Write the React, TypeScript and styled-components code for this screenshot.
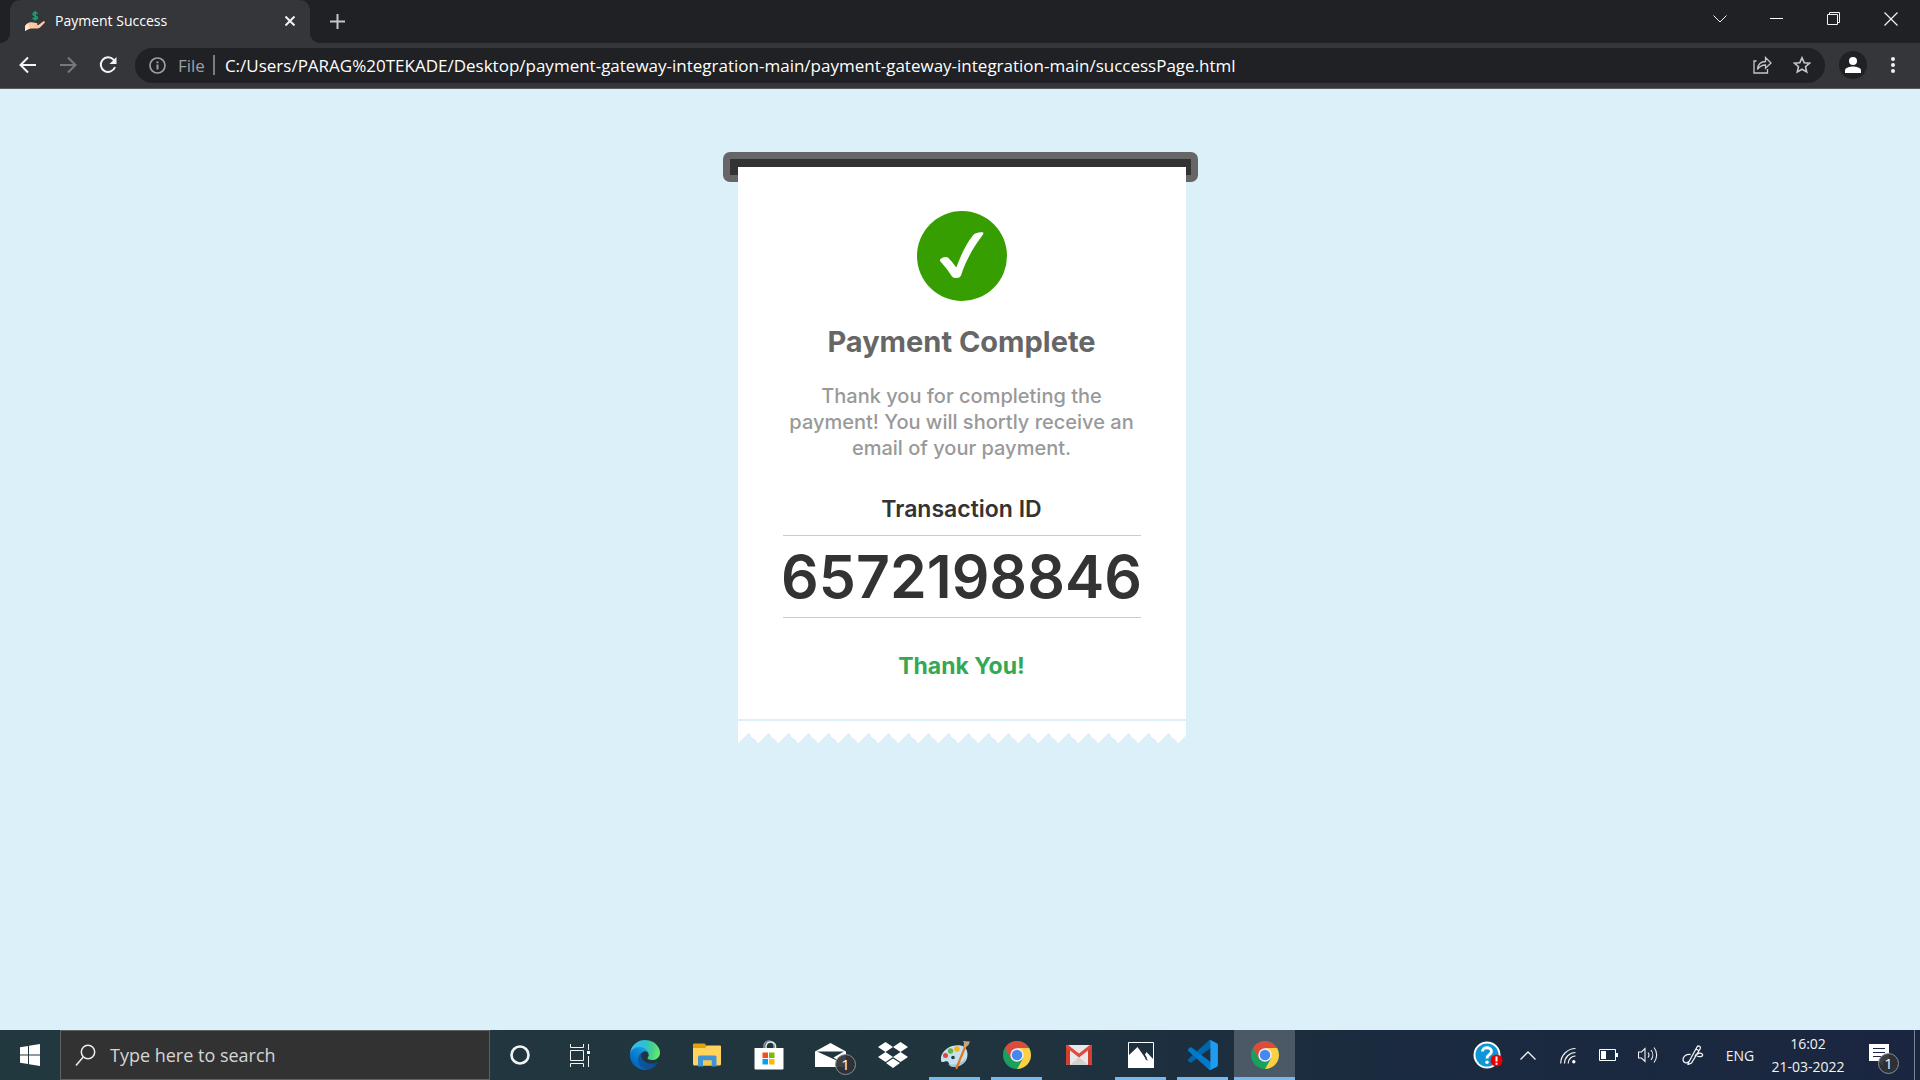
import React from "react";
import styled, { createGlobalStyle, css } from "styled-components";

const ui = `"Open Sans", "Noto Sans", sans-serif`;
const round = `Inter, "Open Sans", sans-serif`;

const GlobalStyle = createGlobalStyle`
  *, *::before, *::after { box-sizing: border-box; }
  body { margin: 0; background: #dbf0f9; font-family: ${ui}; }
  button { border: 0; padding: 0; margin: 0; background: none; color: inherit; font: inherit; }
  input { border: 0; padding: 0; margin: 0; background: none; font: inherit; outline: 0; min-width: 0; }
  svg { display: block; flex: none; }
  h1, h2, p { margin: 0; }
`;

const Screen = styled.div`
  min-height: 100vh;
  display: grid;
  grid-template-rows: auto 1fr auto;
`;

/* ---------- browser ---------- */

const TabStrip = styled.div`
  height: 43px;
  display: flex;
  align-items: stretch;
  padding-left: 10px;
  background: #202124;
  color: #fff;
`;

const Tab = styled.div`
  position: relative;
  width: 300px;
  display: flex;
  align-items: center;
  gap: 10px;
  padding: 0 12px 2px 15px;
  border-radius: 10px 10px 0 0;
  background: #35363a;
  font-size: 14px;

  &::before, &::after {
    content: "";
    position: absolute;
    bottom: 0;
    width: 10px;
    height: 10px;
  }
  &::before { left: -10px; background: radial-gradient(circle at 0 0, #202124 10px, #35363a 10px); }
  &::after { right: -10px; background: radial-gradient(circle at 100% 0, #202124 10px, #35363a 10px); }
`;

const TabTitle = styled.span`
  flex: 1;
  white-space: nowrap;
`;

const IconButton = styled.button<{ $w: number; $color?: string }>`
  width: ${(p) => p.$w}px;
  display: flex;
  align-items: center;
  justify-content: center;
  flex: none;
  color: ${(p) => p.$color ?? "#f1f3f4"};
`;

const NewTab = styled(IconButton)`
  margin-left: 12px;
`;

const WindowControls = styled.div`
  margin-left: auto;
  display: flex;
  padding-bottom: 6px;
`;

const Toolbar = styled.div`
  height: 46px;
  display: flex;
  align-items: center;
  padding: 0 8px 1px;
  background: #35363a;
  border-bottom: 1px solid #5c5d61;
`;

const Omnibox = styled.form`
  flex: 1;
  height: 35px;
  display: flex;
  align-items: center;
  margin: 0 8px 0 7px;
  padding: 0 3px 0 14px;
  border-radius: 18px;
  background: #202124;
  font-size: 17px;
`;

const Scheme = styled.label`
  display: flex;
  align-items: center;
  gap: 12px;
  color: #9aa0a6;
`;

const Divider = styled.span`
  width: 2px;
  height: 20px;
  margin: 0 10px 0 8px;
  background: #7a7c80;
`;

const Address = styled.input`
  flex: 1;
  color: #fff;
`;

const Avatar = styled.span`
  width: 28px;
  height: 28px;
  display: grid;
  place-items: center;
  border-radius: 50%;
  background: #202124;
`;

/* ---------- receipt ---------- */

const Page = styled.main`
  display: flex;
  flex-direction: column;
  align-items: center;
  padding: 63px 0 40px;
  background: #dbf0f9;
`;

const Receipt = styled.section`
  width: 475px;
  color: #333;
  font-family: ${round};
  text-align: center;
`;

const Slot = styled.div`
  height: 30px;
  border: 7px solid #666;
  border-radius: 7px;
  background: #333;
`;

const Sheet = styled.div`
  position: relative;
  margin: -15px 12px 0 15px;
`;

const Paper = styled.div`
  display: flex;
  flex-direction: column;
  align-items: center;
  padding: 44px 45px 36px;
  background: #fff;
`;

const Title = styled.h1`
  margin-top: 21px;
  color: #666;
  font-size: 29px;
  line-height: 40px;
  font-weight: 700;
  white-space: nowrap;
`;

const Message = styled.p`
  margin-top: 21px;
  color: #999;
  font-size: 20px;
  line-height: 26px;
  font-weight: 500;
`;

const Heading = styled.h2<{ $thanks?: boolean }>`
  margin-top: 31px;
  font-size: 23px;
  line-height: 34px;
  font-weight: ${(p) => (p.$thanks ? 700 : 600)};
  color: ${(p) => (p.$thanks ? "#34a853" : "#333")};
`;

const TransactionId = styled.div`
  align-self: stretch;
  display: flex;
  justify-content: center;
  margin-top: 9px;
  border: 1px solid #ccc;
  border-width: 1px 0;
  font-size: 59px;
  line-height: 81px;
  font-weight: 600;
`;

const Tear = styled.div`
  height: 22px;
  margin-top: 2px;
  padding-top: 12px;
  background: linear-gradient(#fff, #fff) top / 100% 12px no-repeat;

  &::after {
    content: "";
    display: block;
    height: 10px;
    background: conic-gradient(from 135deg at 50% 0, transparent 90deg, #fff 0) 0 0 / 20px 10px repeat-x;
  }
`;

/* ---------- taskbar ---------- */

const Taskbar = styled.footer`
  height: 50px;
  display: flex;
  align-items: stretch;
  background: linear-gradient(90deg, #22383f 0%, #20343e 50%, #1b2b3f 72%, #1a2640 100%);
  color: #fff;
`;

const Search = styled.label`
  width: 430px;
  display: flex;
  align-items: center;
  gap: 14px;
  padding: 0 14px;
  border: 1px solid #5f6061;
  background: #323232;
  font-size: 18px;
`;

const SearchInput = styled.input`
  flex: 1;
  color: #fff;
  &::placeholder { color: #d6d6d6; opacity: 1; }
`;

const Apps = styled.nav`
  display: flex;
  gap: 1px;
  margin-left: 3px;
`;

const AppButton = styled.button<{ $state?: "open" | "active" }>`
  position: relative;
  width: 61px;
  display: grid;
  place-items: center;
  ${(p) => p.$state === "active" && css`background: #4b5866;`}
  ${(p) =>
    p.$state &&
    css`
      &::after {
        content: "";
        position: absolute;
        bottom: 0;
        left: ${p.$state === "active" ? 0 : 5}px;
        right: ${p.$state === "active" ? 0 : 5}px;
        height: 3px;
        background: #76b9ed;
      }
    `}
`;

const WithBadge = styled.span`
  position: relative;
  display: block;
`;

const Badge = styled.span`
  position: absolute;
  left: 20px;
  top: 11px;
  width: 21px;
  height: 21px;
  border: 1px solid #8b9094;
  border-radius: 50%;
  background: rgba(48, 50, 54, 0.93);
  font-size: 15px;
  line-height: 19px;
  text-align: center;
`;

const NoteBadge = styled(Badge)`
  left: 9px;
  top: 9px;
`;

const Tray = styled.div`
  margin-left: auto;
  display: flex;
  align-items: stretch;
`;

const Language = styled(IconButton)`
  font-size: 14px;
`;

const Clock = styled(IconButton)`
  flex-direction: column;
  font-size: 14px;
  line-height: 23px;
`;

const ShowDesktop = styled.button`
  width: 6px;
  border-left: 1px solid #7b8391;
`;

/* ---------- drawings ---------- */

const stroke = { fill: "none", stroke: "currentColor" };

const HandIcon = () => (
  <svg width="20" height="20" viewBox="0 0 20 20">
    <path d="M12.500 2.800C11.500 1.500 8 1.300 8 3.300S12.500 4.500 12.500 6.500 8.700 8.500 7.700 7M10.200 0V9.500" fill="none" stroke="#12a672" strokeWidth="1.500" />
    <path d="M0 15C2 12 4 11 6.500 11.300L11.500 12c1.500.3 1.300 2-.2 2L9 14.200l4.500-.2 4.500-3.500c1.500-.7 2.500.2 1.500 1.500L15 16.500c-1 .8-2 1-3.500 1H6L3 18.200 0 20z" fill="#fcc9a5" />
    <path d="M0 15l3-2.500 1.500 5L0 20z" fill="#ffe6cf" />
  </svg>
);

const Chrome = () => (
  <svg width="28" height="28" viewBox="0 0 48 48">
    <circle cx="24" cy="24" r="24" fill="#18a05e" />
    <path d="M24 12H44.780A24 24 0 0 0 3.220 12L13.600 30 24 24z" fill="#dc4b3e" />
    <path d="M24 12H44.780A24 24 0 0 1 24 48L34.400 30z" fill="#ffce44" />
    <circle cx="24" cy="24" r="11.500" fill="#f1f1f1" />
    <circle cx="24" cy="24" r="9" fill="#4688f1" />
  </svg>
);

const Edge = () => (
  <svg width="30" height="30" viewBox="0 0 256 256">
    <defs>
      <linearGradient id="edgeA" x1="60" y1="177" x2="241" y2="177" gradientUnits="userSpaceOnUse">
        <stop stopColor="#0c59a4" /><stop offset="1" stopColor="#114a8b" />
      </linearGradient>
      <linearGradient id="edgeB" x1="150" y1="90" x2="45" y2="225" gradientUnits="userSpaceOnUse">
        <stop stopColor="#1b9de2" /><stop offset=".5" stopColor="#0b7fd2" /><stop offset="1" stopColor="#0067c0" />
      </linearGradient>
      <linearGradient id="edgeC" x1="10" y1="70" x2="245" y2="120" gradientUnits="userSpaceOnUse">
        <stop stopColor="#35c1f1" /><stop offset=".4" stopColor="#2cbfd5" /><stop offset=".75" stopColor="#45d08a" /><stop offset="1" stopColor="#66eb6e" />
      </linearGradient>
    </defs>
    <path fill="url(#edgeA)" d="M231.070 190.540c-3.380 1.770-6.880 3.350-10.460 4.720-11.480 4.280-23.650 6.470-35.910 6.470-47.320 0-88.540-32.550-88.540-74.320.13-11.410 6.410-21.860 16.420-27.340-42.800 1.800-53.800 46.400-53.800 72.530 0 73.880 68.100 81.370 82.770 81.370 7.910 0 19.840-2.300 27-4.560l1.310-.44c27.530-9.510 51-28.110 66.600-52.800 1.230-1.990.6-4.590-1.380-5.800a4.240 4.240 0 0 0-4.010.17z" />
    <path fill="url(#edgeB)" d="M105.730 241.420c-8.910-5.540-16.640-12.800-22.740-21.340-26.310-36.060-18.410-86.620 17.650-112.930 3.760-2.740 7.730-5.170 11.880-7.260 3.120-1.470 8.450-4.130 15.540-4 10.110.08 19.610 4.870 25.690 12.960 4.040 5.370 6.260 11.910 6.360 18.630 0-.21 24.460-79.600-80-79.600-43.900 0-80 41.660-80 78.210-.17 19.350 3.970 38.500 12.110 56.060 27.620 58.910 94.900 87.780 156.640 67.240-21.140 6.650-44.130 3.740-62.970-7.970z" />
    <path fill="url(#edgeC)" d="M152.330 148.860c-.81 1.050-3.300 2.500-3.300 5.660 0 2.610 1.700 5.120 4.720 7.230 14.380 10 41.490 8.680 41.560 8.680a59.560 59.560 0 0 0 30.270-8.350A61.380 61.380 0 0 0 255.870 109.200c.26-22.410-8-37.310-11.340-43.910C223.340 23.840 177.720 0 128.110 0A128 128 0 0 0 .1 126.200c.48-36.540 36.800-66.050 80-66.050 3.500 0 23.460.34 42 10.070 16.340 8.580 24.900 18.940 30.850 29.210 6.180 10.670 7.280 24.150 7.280 29.520s-2.740 13.330-7.900 19.910z" />
  </svg>
);

const Explorer = () => (
  <svg width="28" height="24" viewBox="0 0 28 24">
    <path d="M0 1.500Q0 .5 1 .5h10.500L14 3H28v6H0z" fill="#e2a10b" />
    <path d="M0 5h12l2-2.500h13q1 0 1 1V21q0 1.500-1.500 1.500h-25Q0 22.500 0 21z" fill="#ffd35c" />
    <path d="M5 14q0-1.500 1.500-1.500h15.500q1.500 0 1.500 1.500v9.500H18.500v-6H10v6H5z" fill="#3f94d8" />
    <path d="M10 17.500h8.500v5H10z" fill="#f5c84b" />
  </svg>
);

const Store = () => (
  <svg width="30" height="30" viewBox="0 0 30 30">
    <path d="M10 8V6a5 5 0 0 1 10 0v2" fill="none" stroke="#8d979c" strokeWidth="1.500" />
    <path d="M12 8V5.500a5 5 0 0 1 9.500 0V8" fill="none" stroke="#e4e8ea" strokeWidth="1.500" />
    <path d="M.5 8h29v20.500q0 1-1 1h-27q-1 0-1-1z" fill="#fff" />
    <path d="M8.500 12.500h5.500V18H8.500z" fill="#f25022" /><path d="M15 12.500h5.500V18H15z" fill="#7fba00" />
    <path d="M8.500 19h5.500v5.500H8.500z" fill="#00a4ef" /><path d="M15 19h5.500v5.500H15z" fill="#ffb900" />
  </svg>
);

const Mail = () => (
  <svg width="31" height="24" viewBox="0 0 31 24">
    <path d="M0 8.500L15.500 0 31 8.500V24H0z" fill="#fff" />
    <path d="M2 8.500H29L18.500 14.500 25 19z" fill="#21353f" />
  </svg>
);

const Dropbox = () => (
  <svg width="30" height="26" viewBox="0 0 30 26" fill="#fff">
    <path d="M7.500 0L15 5 7.500 10 0 5zM22.500 0L30 5 22.500 10 15 5zM7.500 10L15 15 7.500 20 0 15zM22.500 10L30 15 22.500 20 15 15zM15 16.500L22 21 15 26 8 21z" />
  </svg>
);

const Paint = () => (
  <svg width="30" height="30" viewBox="0 0 30 30">
    <path d="M1 17C3 9 12 4 21 5.500c6 1 8 8 5.500 14C24 25 17 27 12 26.500c-4-.5-2-4-4.500-5C5 20.500 1.500 24 1 20.500z" fill="#c5e0ef" />
    <path d="M8 24c6 2 14 0 18.500-7-2 8-8 10.500-14.500 10z" fill="#9fc4da" />
    <circle cx="5.500" cy="15.500" r="2.500" fill="#e0473c" /><circle cx="10.500" cy="11" r="2.700" fill="#64b445" />
    <circle cx="17" cy="9" r="2.800" fill="#f8b41c" /><circle cx="13" cy="17.500" r="1.800" fill="#223a49" />
    <path d="M25.500 6L16.500 28" stroke="#e07a1f" strokeWidth="2.200" strokeLinecap="round" />
    <path d="M23.500 6.500L24 2.500 22.500 1l7.500.5L28.500 5 25.500 7.500z" fill="#c9a27a" />
  </svg>
);

const Gmail = () => (
  <svg width="26" height="20" viewBox="0 0 26 20">
    <rect width="26" height="20" rx="1.500" fill="#e8e8e8" />
    <path d="M4 20L13 12l9 8z" fill="#d0d0d0" />
    <path d="M0 1.500Q0 0 1.500 0L4 1.500V20H1.500Q0 20 0 18.500zM26 1.500Q26 0 24.500 0L22 1.500V20h2.500q1.500 0 1.500-1.500z" fill="#d23f31" />
    <path d="M1.500 1.500L13 10.500 24.500 1.500" fill="none" stroke="#e04a3c" strokeWidth="3" />
  </svg>
);

const Photos = () => (
  <svg width="26" height="26" viewBox="0 0 26 26">
    <path d="M.5.5h25v25H.5z" fill="none" stroke="#fff" />
    <path d="M0 14L9.500 5l8.500 12 1-1-2-3.500L18.500 10 26 18v8H0z" fill="#fff" />
    <path d="M15.500 12L20 18.500 18 18z" fill="#20343f" />
  </svg>
);

const Code = () => (
  <svg width="30" height="30" viewBox="0 0 256 254">
    <path fill="#0065a9" d="M246.100 26.900L193.400 1.500a15.900 15.900 0 0 0-18.200 3.100L2.600 162a10.700 10.700 0 0 0 0 15.800l14.100 12.800a10.700 10.700 0 0 0 13.600.6L238.200 33.400c7-5.300 17-.3 17 8.500z" />
    <path fill="#007acc" d="M246.100 227.200l-52.700 25.400a15.900 15.900 0 0 1-18.200-3.100L2.600 92.100a10.700 10.700 0 0 1 0-15.800l14.100-12.800a10.700 10.700 0 0 1 13.600-.6L238.200 220.600c7 5.300 17 .3 17-8.400z" />
    <path fill="#1f9cf0" d="M193.400 252.600a15.900 15.900 0 0 1-18.200-3.100c5.900 5.900 16 1.700 16-6.700V11.200c0-8.300-10.100-12.500-16-6.600a15.900 15.900 0 0 1 18.200-3.100l52.700 25.300a16 16 0 0 1 9.100 14.500v171.500a16 16 0 0 1-9.100 14.400z" />
  </svg>
);

const apps: { name: string; icon: React.ReactNode; state?: "open" | "active" }[] = [
  { name: "Edge", icon: <Edge /> },
  { name: "File Explorer", icon: <Explorer /> },
  { name: "Store", icon: <Store /> },
  { name: "Mail", icon: <WithBadge><Mail /><Badge>1</Badge></WithBadge> },
  { name: "Dropbox", icon: <Dropbox /> },
  { name: "Paint", icon: <Paint />, state: "open" },
  { name: "Chrome", icon: <Chrome />, state: "open" },
  { name: "Gmail", icon: <Gmail /> },
  { name: "Photos", icon: <Photos />, state: "open" },
  { name: "Visual Studio Code", icon: <Code />, state: "open" },
  { name: "Chrome window", icon: <Chrome />, state: "active" },
];

export default function App() {
  return (
    <Screen>
      <GlobalStyle />
      <header>
        <TabStrip>
          <Tab>
            <HandIcon />
            <TabTitle>Payment Success</TabTitle>
            <IconButton $w={16} aria-label="Close tab">
              <svg width="10" height="10" viewBox="0 0 10 10" {...stroke} strokeWidth="2"><path d="M.5.5l9 9M9.500.5l-9 9" /></svg>
            </IconButton>
          </Tab>
          <NewTab $w={31} $color="#c4c7c9" aria-label="New tab">
            <svg width="15" height="15" viewBox="0 0 15 15" {...stroke} strokeWidth="2"><path d="M7.500 0v15M0 7.500h15" /></svg>
          </NewTab>
          <WindowControls>
            <IconButton $w={57} aria-label="Search tabs">
              <svg width="14" height="8" viewBox="0 0 14 8" {...stroke}><path d="M.5.5L7 7 13.500.5" /></svg>
            </IconButton>
            <IconButton $w={57} aria-label="Minimize">
              <svg width="13" height="1" viewBox="0 0 13 1"><path d="M0 0h13v1H0z" fill="#fff" /></svg>
            </IconButton>
            <IconButton $w={57} aria-label="Restore">
              <svg width="13" height="13" viewBox="0 0 13 13" {...stroke}><path d="M.5 2.500h10v10H.5zM2.500 2.500v-2h10v10h-2" /></svg>
            </IconButton>
            <IconButton $w={58} aria-label="Close">
              <svg width="14" height="14" viewBox="0 0 14 14" {...stroke} strokeWidth="1.200"><path d="M.5.5l13 13M13.500.5l-13 13" /></svg>
            </IconButton>
          </WindowControls>
        </TabStrip>
        <Toolbar>
          <IconButton $w={40} aria-label="Back">
            <svg width="18" height="18" viewBox="0 0 18 18" {...stroke} strokeWidth="2"><path d="M17 9H2M9 1.500L1.500 9 9 16.500" /></svg>
          </IconButton>
          <IconButton $w={40} $color="#77787c" aria-label="Forward">
            <svg width="18" height="18" viewBox="0 0 18 18" {...stroke} strokeWidth="2"><path d="M1 9h15M9 1.500L16.500 9 9 16.500" /></svg>
          </IconButton>
          <IconButton $w={40} aria-label="Reload">
            <svg width="18" height="18" viewBox="0 0 18 18" {...stroke} strokeWidth="2"><path d="M16 11a7.300 7.300 0 1 1-1.500-7.300L16 5" /><path d="M17.500 1v7h-7z" fill="currentColor" stroke="none" /></svg>
          </IconButton>
          <Omnibox>
            <Scheme htmlFor="address">
              <svg width="17" height="17" viewBox="0 0 17 17" {...stroke} strokeWidth="1.700"><circle cx="8.500" cy="8.500" r="7.500" /><path d="M8.500 7.500v5M8.500 4.500v1.700" strokeWidth="2" /></svg>
              File
            </Scheme>
            <Divider />
            <Address id="address" defaultValue="C:/Users/PARAG%20TEKADE/Desktop/payment-gateway-integration-main/payment-gateway-integration-main/successPage.html" />
            <IconButton $w={40} $color="#c4c7c9" type="button" aria-label="Share">
              <svg width="19" height="18" viewBox="0 0 19 18" {...stroke} strokeWidth="1.300"><path d="M3.500 5H1v12h13.500v-4" /><path d="M4.500 13.500C5 8 7.500 5.500 12.500 5.500V1.500L18 7l-5.500 5.200V9C9 9 6.500 10.500 4.500 13.500z" /></svg>
            </IconButton>
            <IconButton $w={40} $color="#c4c7c9" type="button" aria-label="Bookmark">
              <svg width="18" height="18" viewBox="0 0 18 18" {...stroke} strokeWidth="1.600"><path d="M9 1.800l2.200 4.900 5.300.5-4 3.500 1.200 5.200L9 13.200l-4.700 2.700 1.200-5.200-4-3.500 5.300-.5z" /></svg>
            </IconButton>
          </Omnibox>
          <IconButton $w={40} aria-label="Profile">
            <Avatar>
              <svg width="16" height="16" viewBox="0 0 16 16" fill="#fff"><circle cx="8" cy="4" r="4" /><path d="M0 16v-2.500C0 10.500 5 9.500 8 9.500s8 1 8 4V16z" /></svg>
            </Avatar>
          </IconButton>
          <IconButton $w={39} aria-label="Menu">
            <svg width="4" height="18" viewBox="0 0 4 18" fill="currentColor"><circle cx="2" cy="3" r="2" /><circle cx="2" cy="9" r="2" /><circle cx="2" cy="15" r="2" /></svg>
          </IconButton>
        </Toolbar>
      </header>

      <Page>
        <Receipt>
          <Slot />
          <Sheet>
            <Paper>
              <svg width="90" height="90" viewBox="0 0 90 90">
                <circle cx="45" cy="45" r="45" fill="#369e00" />
                <path d="M23.500 50.500Q22 48.500 24.500 47.200 28 45.200 31 46.500 35.500 51 39.300 56.500C43.500 45 48.500 34 55.500 25Q58 21 65.500 21.300 67 21.500 66 23.500C56 37 49.500 48 44 64.500Q43 67 39.300 67 36.200 67 35 65.500 30 57.500 23.500 50.500z" fill="#fff" />
              </svg>
              <Title>Payment Complete</Title>
              <Message>Thank you for completing the payment! You will shortly receive an email of your payment.</Message>
              <Heading>Transaction ID</Heading>
              <TransactionId>6572198846</TransactionId>
              <Heading $thanks>Thank You!</Heading>
            </Paper>
            <Tear />
          </Sheet>
        </Receipt>
      </Page>

      <Taskbar>
        <IconButton $w={60} aria-label="Start">
          <svg width="20" height="22" viewBox="0 0 20 22" fill="#fff"><path d="M0 3.200L8 2v8.500H0zM9 1.800L20 0v10.500H9zM0 11.500h8V20L0 18.800zM9 11.500h11V22L9 20.200z" /></svg>
        </IconButton>
        <Search>
          <svg width="21" height="23" viewBox="0 0 21 23" fill="none" stroke="#eee" strokeWidth="1.500"><circle cx="13" cy="8" r="6.700" /><path d="M8.200 13L1 21.500" /></svg>
          <SearchInput placeholder="Type here to search" aria-label="Type here to search" />
        </Search>
        <IconButton $w={60} aria-label="Cortana">
          <svg width="20" height="22" viewBox="0 0 20 22" {...stroke} strokeWidth="2.600"><circle cx="10" cy="11" r="8.500" /></svg>
        </IconButton>
        <IconButton $w={61} aria-label="Task view">
          <svg width="21" height="23" viewBox="0 0 21 23" {...stroke}><path d="M.5 0v3.500h13V0M.5 6.500h13v10H.5zM.5 23v-3.500h13V23M18.500 0v6M18.500 12v11" /><path d="M17 7h3v3h-3z" fill="currentColor" stroke="none" /></svg>
        </IconButton>
        <Apps>
          {apps.map((a) => (
            <AppButton key={a.name} $state={a.state} aria-label={a.name}>{a.icon}</AppButton>
          ))}
        </Apps>
        <Tray>
          <IconButton $w={40} aria-label="Help">
            <svg width="30" height="28" viewBox="0 0 30 28">
              <circle cx="14" cy="14" r="13.500" fill="#fff" /><circle cx="14" cy="14" r="11.500" fill="#0f96d6" />
              <path d="M9.500 10.500C9.500 5.500 18.500 5.500 18.500 10.500 18.500 13.500 14 13.500 14 17.500" fill="none" stroke="#fff" strokeWidth="2.800" /><circle cx="14" cy="21.200" r="1.700" fill="#fff" />
              <circle cx="23.500" cy="19.500" r="6" fill="#e80000" /><path d="M23.500 15.500v5M23.500 21.800v1.900" stroke="#fff" strokeWidth="2" />
            </svg>
          </IconButton>
          <IconButton $w={40} aria-label="Show hidden icons">
            <svg width="16" height="9" viewBox="0 0 16 9" {...stroke} strokeWidth="1.300"><path d="M.5 8.500L8 1l7.500 7.500" /></svg>
          </IconButton>
          <IconButton $w={40} aria-label="Network">
            <svg width="16" height="17" viewBox="0 0 16 17" {...stroke} strokeWidth="1.200"><path d="M.7 16.500A15 15 0 0 1 15.500 1.500M4.500 16.500A11 11 0 0 1 15.500 5.500M8.200 16.500A7.300 7.300 0 0 1 15.500 9" /><circle cx="13.800" cy="14.800" r="1.700" fill="#fff" stroke="none" /></svg>
          </IconButton>
          <IconButton $w={40} aria-label="Battery">
            <svg width="19" height="12" viewBox="0 0 19 12"><path d="M.5.5h16v11H.5z" fill="none" stroke="#fff" /><path d="M2 2h5v8H2zM17 4h2v4h-2z" fill="#fff" /></svg>
          </IconButton>
          <IconButton $w={40} aria-label="Volume">
            <svg width="21" height="18" viewBox="0 0 21 18" {...stroke} strokeWidth="1.100"><path d="M.5 6h3L7 2.500v13L3.500 12h-3zM10 6.500a4 4 0 0 1 0 5M13 4a8 8 0 0 1 0 10M16 1.500a12 12 0 0 1 0 15" /></svg>
          </IconButton>
          <IconButton $w={50} aria-label="Windows Ink">
            <svg width="22" height="20" viewBox="0 0 22 20" {...stroke} strokeWidth="1.300"><path d="M6.500 17.500L15 2q1-1.500 2.500-.7T18 4L9.500 18l-3.500 1.500zM14 4l3 1.800M8.500 9.500C4 9 1 11.500 1 14.500s3.500 4.500 6 2M13 11.500C14 8 20 7 20.500 9.500S17 12 15 11" /></svg>
          </IconButton>
          <Language $w={44}>ENG</Language>
          <Clock $w={92}><time>16:02</time><time>21-03-2022</time></Clock>
          <IconButton $w={60} aria-label="Notifications">
            <WithBadge>
              <svg width="30" height="22" viewBox="0 0 30 22"><path d="M0 0h20v17h-6v5l-5-5H0z" fill="#fff" /><path d="M4 4.500h12M4 8.500h12M4 12.500h8" stroke="#1a2640" /></svg>
              <NoteBadge>1</NoteBadge>
            </WithBadge>
          </IconButton>
          <ShowDesktop aria-label="Show desktop" />
        </Tray>
      </Taskbar>
    </Screen>
  );
}
